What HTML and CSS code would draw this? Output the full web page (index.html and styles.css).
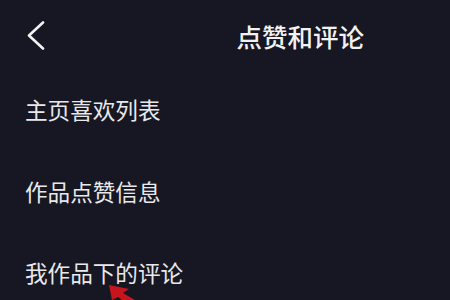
FILE: index.html
```html
<!DOCTYPE html>
<html lang="zh-CN">
<head>
<meta charset="utf-8">
<title>点赞和评论</title>
<link rel="stylesheet" href="styles.css">
</head>
<body>
<div class="screen">
  <header class="header">
    <div class="back">
      <svg class="back-icon" width="20" height="30" viewBox="0 0 20 30" aria-hidden="true">
        <polyline points="17,2.5 3,15.5 17,28.5" fill="none" stroke="#f2f2f4" stroke-width="2.6" stroke-linecap="round" stroke-linejoin="round"/>
      </svg>
    </div>
    <h1 class="title">点赞和评论</h1>
  </header>
  <ul class="list">
    <li class="item">主页喜欢列表</li>
    <li class="item">作品点赞信息</li>
    <li class="item">我作品下的评论</li>
  </ul>
  <svg class="arrow" width="40" height="15" viewBox="0 0 40 15" aria-hidden="true">
    <polygon points="4,0 7,15 13,12 17,15 30,15 18,8 24,4" fill="#c8141c"/>
  </svg>
</div>
</body>
</html>
```

FILE: styles.css
```css
html, body {
  margin: 0;
  padding: 0;
  background: #161722;
}

.screen {
  position: relative;
  width: 450px;
  height: 300px;
  overflow: hidden;
  background: #161722;
  font-family: "Noto Sans CJK SC", "Noto Sans", sans-serif;
  color: #ececee;
}

.header {
  display: flex;
  justify-content: space-between;
  align-items: center;
  height: 69px;
  padding: 0 86px 0 26px;
}

.back {
  display: flex;
  align-items: center;
}

.back-icon {
  display: block;
  margin-top: 1px;
}

.title {
  margin: 3px 0 0 0;
  font-size: 25.5px;
  font-weight: 500;
  color: #f2f2f4;
  line-height: 1;
}

.list {
  list-style: none;
  margin: 0;
  padding: 0;
}

.item {
  height: 81.5px;
  line-height: 81.5px;
  padding-left: 25px;
  font-size: 22.6px;
  font-weight: 400;
  color: #e9e9ec;
}

.arrow {
  position: absolute;
  left: 105px;
  top: 285px;
}
```
